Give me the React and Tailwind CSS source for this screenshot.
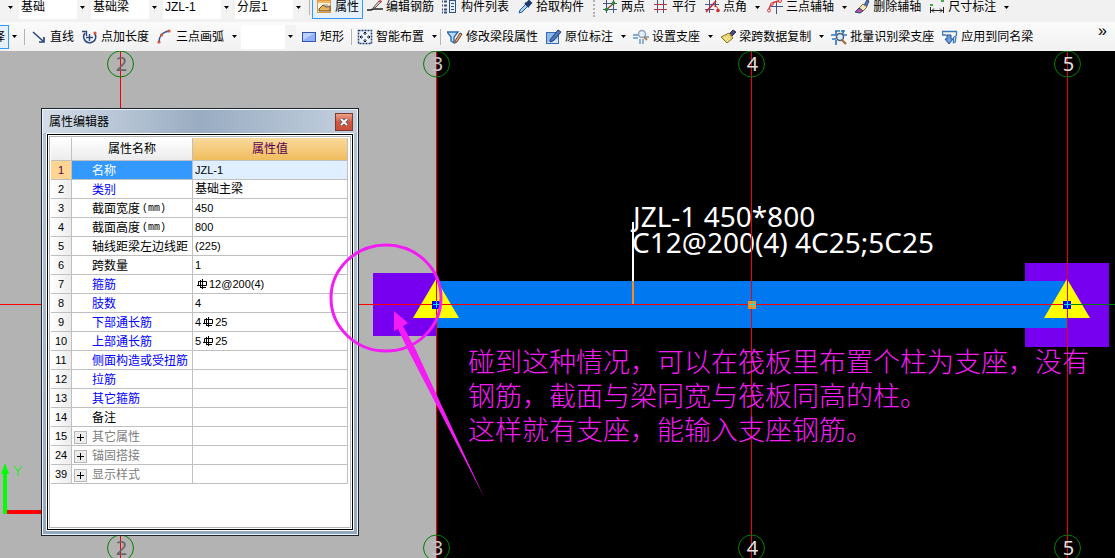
import React from "react";
import { clsx } from "clsx";

const icons = {
    property: (
        <>
            <rect x="1.5" y="1.5" width="13" height="12" fill="#fff6e0" stroke="#e39a3c" />
            <rect x="2" y="2" width="12" height="2" fill="#f6b765" />
            <path d="M3 10l4-4 3 2 4-1v5H3z" fill="#e8b45a" stroke="#6b4a20" />
            <path d="M8 6h4M10 8h3" stroke="#8a8f99" />
        </>
    ),
    editBar: (
        <>
            <path d="M0 11h4l2-1h10" stroke="#222" strokeWidth="1.6" fill="none" />
            <path d="M6 9l6-7 2 1-6 6z" fill="#f0d0b0" stroke="#555" />
            <path d="M12 2l1-1 2 1-1 2z" fill="#d33" />
        </>
    ),
    list: (
        <>
            <path d="M0 2.5h5M0 6.5h5M0 10.5h5M0 13.5h5" stroke="#34507c" strokeWidth="2" strokeDasharray="1 1 3 1" />
            <rect x="7.5" y="1.5" width="6" height="12" fill="#e6eefb" stroke="#34507c" />
            <path d="M9 4.5h3M9 7.5h3M9 10.5h3" stroke="#34507c" />
        </>
    ),
    dropper: (
        <>
            <path d="M2 14l1-3 6-6 2 2-6 6z" fill="#a8d4f4" stroke="#2b5f9e" />
            <path d="M8 4l4 4M9 5l3-3 2 2-3 3z" stroke="#1d3c6b" strokeWidth="2" fill="#1d3c6b" />
        </>
    ),
    twoPoints: (
        <>
            <path d="M4.5 1v13M11.5 1v13M1 4.5h14M1 10.5h14" stroke="#44558c" />
            <path d="M4 11l8-7" stroke="#7a5522" strokeWidth="1.4" />
            <circle cx="4.5" cy="10.5" r="1.8" fill="#2a8a2a" />
            <circle cx="11.5" cy="4" r="1.8" fill="#2a8a2a" />
        </>
    ),
    parallel: (
        <>
            <path d="M4.5 1v13M10.5 1v13" stroke="#44558c" />
            <path d="M1 5.5h13M1 10.5h13" stroke="#c0303a" />
        </>
    ),
    pointAngle: (
        <>
            <path d="M5.5 1v13M11.5 1v7M1 5.5h14M1 10.5h9" stroke="#44558c" />
            <path d="M2 13L12 2" stroke="#c22" strokeWidth="1.6" />
            <path d="M10 7c3 0 4 2 4 4" stroke="#d22" fill="none" />
            <circle cx="14" cy="11.5" r="1.8" fill="#d22" />
        </>
    ),
    arcAxis: (
        <>
            <path d="M9.5 3v12M4 7.5h12" stroke="#44558c" />
            <path d="M2 12C2 6 6 2 13 2" stroke="#d33" strokeWidth="1.4" fill="none" />
            <circle cx="2" cy="11.5" r="1.5" fill="#fff" stroke="#d33" />
            <circle cx="5" cy="5" r="1.3" fill="#fff" stroke="#d33" />
            <circle cx="13" cy="2" r="1.5" fill="#fff" stroke="#d33" />
        </>
    ),
    eraser: (
        <>
            <path d="M9 8l4-7 2 1-3 7z" fill="#4d7cc8" stroke="#28457a" />
            <path d="M5 9l4-4 4 3-4 4z" fill="#f3e6b8" stroke="#8b6b3a" />
            <path d="M1 13l4-4 4 3-3 2z" fill="#c0509c" stroke="#28457a" />
        </>
    ),
    dimension: (
        <>
            <path d="M1.5 8v6M14.5 8v6M2 11.5h12M5 9.5l-2 2 2 2M11 9.5l2 2-2 2" stroke="#222" fill="none" />
            <rect x="1" y="5" width="3" height="2" fill="#4a4" />
            <rect x="12" y="1" width="3" height="2" fill="#4a4" />
        </>
    ),
    line: (
        <>
            <path d="M2 3l10 9" stroke="#1f3f77" strokeWidth="1.4" />
            <path d="M13 8v5H8" stroke="#1f3f77" strokeWidth="1.6" fill="none" />
        </>
    ),
    pointLength: (
        <>
            <path d="M3 4a6 6 0 1 0 10 1" stroke="#2c4a7c" strokeWidth="1.7" fill="none" />
            <path d="M0 2.5h4.5V7M7.5 5v7M4 8.5h7" stroke="#2c4a7c" strokeWidth="1.4" fill="none" />
            <circle cx="13" cy="4" r="1.6" fill="#d4553c" />
        </>
    ),
    arc: (
        <>
            <path d="M2 13C2 8 5 3 12 2" stroke="#34568c" strokeWidth="1.5" fill="none" />
            <circle cx="2" cy="13" r="1.6" fill="#d4553c" />
            <circle cx="4.5" cy="6" r="1.6" fill="#d4553c" />
            <circle cx="12" cy="2" r="1.6" fill="#d4553c" />
        </>
    ),
    rect: (
        <>
            <rect x="1.5" y="3.5" width="13" height="9" fill="#8fb1f6" stroke="#2e56b8" />
            <path d="M2 4h12L2 11z" fill="#bcd1ff" />
        </>
    ),
    smart: (
        <>
            <rect x="1.5" y="1.5" width="13" height="13" fill="#eef4ff" stroke="#24426f" strokeWidth="1.5" strokeDasharray="2 1" />
            <path d="M8 3v3M8 10v3M3 8h3M10 8h3M6.5 4.5L8 3l1.5 1.5M6.5 11.5L8 13l1.5-1.5M4.5 6.5L3 8l1.5 1.5M11.5 6.5L13 8l-1.5 1.5" stroke="#111" fill="none" />
        </>
    ),
    modify: (
        <>
            <path d="M0 3h11L7 8v6l-3-2V8z" fill="#bfe0fb" stroke="#2a6cb4" strokeWidth="1.4" />
            <path d="M8 12l5-8 2 1-5 8-2 1z" fill="#e9a878" stroke="#6a4030" />
        </>
    ),
    inPlace: (
        <>
            <rect x="0.5" y="3.5" width="12" height="11" fill="#8fb8ec" stroke="#3a6ab0" />
            <path d="M1 14l4-4 3 2 4-3v5z" fill="#d6e8fb" />
            <path d="M4 11l8-10 3 2-8 9-3 1z" fill="#4d79bf" stroke="#1d3d73" />
        </>
    ),
    support: (
        <>
            <path d="M0 6h6M0 9h5M7 10v5M10 10v5M12 8h4" stroke="#5c95cf" strokeWidth="1.4" />
            <circle cx="9" cy="5" r="3.5" fill="#e3f0fb" stroke="#92a4b8" strokeWidth="1.5" />
            <path d="M11 8l3 3" stroke="#b08050" strokeWidth="2" />
        </>
    ),
    brush: (
        <>
            <path d="M9 5l4-4 3 2-4 4z" fill="#4a4a7c" stroke="#2d2d55" />
            <path d="M1 8l8-4 4 5-6 5z" fill="#e8d36a" stroke="#8a7428" />
            <path d="M4 8l4 4M6 7l4 4" stroke="#fff6bd" />
        </>
    ),
    batch: (
        <>
            <path d="M4 2h5M10 2h4M0 6h5M12 6h4M1 10h4M5 11v5M5 2v4M12 1v4" stroke="#2f7ac0" strokeWidth="1.7" />
            <circle cx="9" cy="8" r="3.5" fill="#dcecfb" stroke="#4e5f78" strokeWidth="1.5" />
            <path d="M11 11l4 4" stroke="#a5683a" strokeWidth="2.2" />
        </>
    ),
    apply: (
        <>
            <path d="M0 2.5h14.5v4l-3 2v6M0.5 2v4h4M14 8l-1 6" stroke="#3878bd" strokeWidth="1.3" fill="none" />
            <path d="M5 6h4v4h2l-4 5-4-5h2z" fill="#6aa0e4" stroke="#244f95" />
        </>
    ),
};

function Icon({ name }) {
    return (
        <svg viewBox="0 0 16 16" fill="none" className="size-4 shrink-0">
            {icons[name]}
        </svg>
    );
}

function Caret() {
    return (
        <svg viewBox="0 0 5 3" className="h-[3px] w-[5px]">
            <path d="M0 0h5L2.5 3z" fill="#000" />
        </svg>
    );
}

function Tool({ icon, label, menu, active }) {
    return (
        <div className="flex shrink-0 items-center">
            <button
                className={clsx(
                    "flex items-center gap-[3px]",
                    active ? "h-6 border border-[#3399ff] bg-[#e4f0fc] px-[3px]" : "px-1"
                )}
            >
                <Icon name={icon} />
                <span>{label}</span>
            </button>
            {menu && (
                <button aria-label={`${label} ▾`} className="flex h-5 w-3 items-center justify-center">
                    <Caret />
                </button>
            )}
        </div>
    );
}

function Combo({ label, value, wide }) {
    return (
        <label className={clsx("relative flex h-6 shrink-0 bg-white", wide ? "w-[69px]" : "w-[55px]")}>
            <select aria-label={label} className="w-full appearance-none bg-transparent pl-[2px] outline-none">
                <option>{value}</option>
            </select>
            <span className="pointer-events-none absolute inset-y-0 right-0 flex w-[11px] items-center justify-center bg-[#f3f3f3]">
                <Caret />
            </span>
        </label>
    );
}

function Toolbars() {
    return (
        <header className="shrink-0 overflow-hidden bg-[#f1f1f1] text-xs text-black">
            <div className="flex h-[22px] items-center pb-2">
                <div className="flex h-6 w-[19px] shrink-0 items-center justify-center bg-[#f3f3f3] pl-[2px]">
                    <Caret />
                </div>
                <div className="flex shrink-0 gap-[3px]">
                    <Combo label="构件类别" value="基础" wide />
                    <Combo label="构件类型" value="基础梁" wide />
                    <Combo label="构件" value="JZL-1" wide />
                    <Combo label="分层" value="分层1" wide />
                </div>
                <span className="mr-[2px] ml-[5px] h-4 w-px shrink-0 bg-[#b4b4b4]" />
                <Tool icon="property" label="属性" active />
                <Tool icon="editBar" label="编辑钢筋" />
                <Tool icon="list" label="构件列表" />
                <Tool icon="dropper" label="拾取构件" />
                <span className="mr-[3px] ml-[5px] h-5 shrink-0 border-l-2 border-dotted border-[#b0b0b0]" />
                <Tool icon="twoPoints" label="两点" />
                <Tool icon="parallel" label="平行" />
                <Tool icon="pointAngle" label="点角" menu />
                <Tool icon="arcAxis" label="三点辅轴" menu />
                <Tool icon="eraser" label="删除辅轴" />
                <Tool icon="dimension" label="尺寸标注" menu />
            </div>
            <div className="flex h-[29px] items-center bg-linear-to-b from-[#fbfbfb] to-[#f1f1f1]">
                <button className="flex h-6 w-[9px] shrink-0 items-center justify-end overflow-hidden border border-l-0 border-[#3399ff] bg-[#e4f0fc] pr-[3px]">
                    择
                </button>
                <button aria-label="选择 ▾" className="flex h-6 w-[10px] shrink-0 items-center justify-center">
                    <Caret />
                </button>
                <span className="mr-[2px] ml-[5px] h-4 w-px shrink-0 bg-[#b4b4b4]" />
                <Tool icon="line" label="直线" />
                <Tool icon="pointLength" label="点加长度" />
                <Tool icon="arc" label="三点画弧" menu />
                <div className="shrink-0 px-px">
                    <Combo label="画弧方式" value="" />
                </div>
                <Tool icon="rect" label="矩形" />
                <span className="mr-px ml-[3px] h-4 w-px shrink-0 bg-[#b4b4b4]" />
                <Tool icon="smart" label="智能布置" menu />
                <span className="mr-[2px] h-4 w-px shrink-0 bg-[#b4b4b4]" />
                <Tool icon="modify" label="修改梁段属性" />
                <Tool icon="inPlace" label="原位标注" menu />
                <Tool icon="support" label="设置支座" menu />
                <Tool icon="brush" label="梁跨数据复制" menu />
                <Tool icon="batch" label="批量识别梁支座" />
                <Tool icon="apply" label="应用到同名梁" />
                <button aria-label="更多" className="mr-2 ml-auto pb-3 text-base leading-4">
                    »
                </button>
            </div>
        </header>
    );
}

/* HRB400 rebar sign */
function Rebar() {
    return (
        <svg viewBox="0 0 10 10" className="mx-[2px] inline size-[10px] align-[-1px]">
            <path d="M5.5 0v10M1.5 2.5h8v4h-8zM3.5 1v7M0 6.5h2M3 8.5h6" stroke="#000" fill="none" />
        </svg>
    );
}

const rows = [
    { id: 1, name: "名称", value: "JZL-1", selected: true },
    { id: 2, name: "类别", value: "基础主梁", blue: true, cjk: true },
    { id: 3, name: "截面宽度", unit: "(mm)", value: "450" },
    { id: 4, name: "截面高度", unit: "(mm)", value: "800" },
    { id: 5, name: "轴线距梁左边线距", value: "(225)" },
    { id: 6, name: "跨数量", value: "1" },
    { id: 7, name: "箍筋", value: <><Rebar />12@200(4)</>, blue: true },
    { id: 8, name: "肢数", value: "4", blue: true },
    { id: 9, name: "下部通长筋", value: <>4<Rebar />25</>, blue: true },
    { id: 10, name: "上部通长筋", value: <>5<Rebar />25</>, blue: true },
    { id: 11, name: "侧面构造或受扭筋", blue: true },
    { id: 12, name: "拉筋", blue: true },
    { id: 13, name: "其它箍筋", blue: true },
    { id: 14, name: "备注" },
    { id: 15, name: "其它属性", group: true },
    { id: 24, name: "锚固搭接", group: true },
    { id: 39, name: "显示样式", group: true },
];

function PropertyRow({ row }) {
    return (
        <tr className="h-[19px]">
            <th
                scope="row"
                className={clsx(
                    "border-r border-b border-[#c0c0c0] p-0 text-[11px] font-normal",
                    row.selected ? "bg-[#ffd591] text-[#5a0050]" : "bg-linear-to-r from-white to-[#ececec]"
                )}
            >
                {row.id}
            </th>
            <td
                className={clsx(
                    "border-r border-b border-[#c0c0c0] p-0",
                    row.selected && "bg-[#3399ff] text-white",
                    row.blue && "text-[#0000ff]",
                    row.group && "text-[#808080]"
                )}
            >
                <div className="flex items-center pt-[2px] leading-4 whitespace-nowrap">
                    <span className="flex w-5 shrink-0 pl-[2px]">
                        {row.group && (
                            <button
                                aria-label={`展开${row.name}`}
                                className="flex size-[13px] items-center justify-center border border-[#b8b8b8] bg-[#ececec]"
                            >
                                <svg viewBox="0 0 7 7" className="size-[7px]">
                                    <path d="M3.5 0v7M0 3.5h7" stroke="#000" />
                                </svg>
                            </button>
                        )}
                    </span>
                    {row.name}
                    {row.unit && (
                        <span className="pl-[2px] font-['Liberation_Mono',monospace] text-[10px]">{row.unit}</span>
                    )}
                </div>
            </td>
            <td
                className={clsx(
                    "border-r border-b border-[#c0c0c0] p-0 pl-[2px] leading-[18px]",
                    row.selected && "bg-[#e0efff]",
                    !row.cjk && "text-[11px]"
                )}
            >
                {row.value}
            </td>
        </tr>
    );
}

function PropertyEditor() {
    return (
        <section className="absolute top-[57px] left-[41px] w-[318px] border border-[#1b2530] text-xs text-black">
            <div className="border border-[#eef4fa] bg-linear-to-b from-[#b3c4d6] to-[#93a9c1] px-[3px] pb-[3px]">
                <div className="-mx-[3px] flex h-[23px] items-center justify-between bg-linear-to-r from-[#d3dde8] via-[#9aacc2] to-[#c3d0de] pr-1 pl-[6px]">
                    <h2>属性编辑器</h2>
                    <button
                        aria-label="关闭"
                        className="flex size-[18px] items-center justify-center border border-[#7c3a34] bg-linear-to-b from-[#eda08c] via-[#d2553f] to-[#c8503a]"
                    >
                        <svg viewBox="0 0 8 8" className="size-2">
                            <path d="M1 1l6 6M7 1L1 7" stroke="#4a4a55" strokeWidth="3.4" />
                            <path d="M1 1l6 6M7 1L1 7" stroke="#fff" strokeWidth="2" />
                        </svg>
                    </button>
                </div>
                <div className="border border-white">
                    <div className="border border-black bg-white p-px">
                        <div className="border border-[#b4b4b4] pt-px pb-[43px] pl-px">
                            <table className="w-[297px] table-fixed border-separate border-spacing-0">
                                <colgroup>
                                    <col className="w-[21px]" />
                                    <col className="w-[121px]" />
                                    <col />
                                </colgroup>
                                <thead>
                                    <tr className="h-[23px]">
                                        <th className="border-r border-b border-[#c0c0c0] bg-linear-to-b from-white to-[#ececec] p-0" />
                                        <th className="border-r border-b border-[#c0c0c0] bg-linear-to-b from-white to-[#ececec] p-0 font-normal">
                                            属性名称
                                        </th>
                                        <th className="border-r border-b border-[#c0c0c0] bg-linear-to-b from-[#f9d99b] to-[#f1bd5c] p-0 font-normal text-[#5a0050]">
                                            属性值
                                        </th>
                                    </tr>
                                </thead>
                                <tbody>
                                    {rows.map((row) => (
                                        <PropertyRow key={row.id} row={row} />
                                    ))}
                                </tbody>
                            </table>
                        </div>
                    </div>
                </div>
            </div>
        </section>
    );
}

const axes = [
    { id: "2", x: 120.5, color: "#666666" },
    { id: "3", x: 436.5, color: "#c8c8c8" },
    { id: "4", x: 751.5, color: "#e0e0e0" },
    { id: "5", x: 1067.5, color: "#e0e0e0" },
];

function Bubble({ axis, y }) {
    const points = Array.from({ length: 16 }, (_, i) => {
        const a = (i * Math.PI) / 8;
        return `${axis.x + 13 * Math.cos(a)},${y + 13 * Math.sin(a)}`;
    }).join(" ");
    return (
        <>
            <polygon points={points} fill="none" stroke="#008000" />
            <text
                x={axis.x + 1}
                y={y + 7}
                textAnchor="middle"
                fill={axis.color}
                className="font-['Noto_Sans',sans-serif] text-[20px]"
            >
                {axis.id}
            </text>
        </>
    );
}

function Grip({ x, color }) {
    return (
        <>
            <rect x={x - 4} y="250" width="8" height="8" fill={color} />
            <path d={`M${x - 3} 253.5h7M${x + 0.5} 250v7`} stroke="#00e8e8" />
        </>
    );
}

function Drawing() {
    return (
        <svg className="absolute inset-0 size-full">
            <rect width="436" height="100%" fill="#b3b3b3" />

            {/* columns and beam */}
            <rect x="373" y="222" width="63" height="63" fill="#7800f0" />
            <rect x="1025" y="212" width="84" height="84" fill="#7800f0" />
            <rect x="437" y="230" width="630" height="47" fill="#0078f0" />
            <path d="M436 228l23 39h-46zM1067 228l23 39h-46z" fill="#ffff00" />

            {/* beam label */}
            <path d="M633 171v59" stroke="#ffffff" strokeWidth="2" />
            <path d="M633 230v23" stroke="#ff8c1a" strokeWidth="2" />
            <g fill="#ffffff" className="font-['Noto_Sans',sans-serif] text-[28px]">
                <text x="633" y="176">JZL-1 450*800</text>
                <text x="632" y="202">C12@200(4) 4C25;5C25</text>
            </g>

            {/* axes */}
            <path d="M0 253.5H1067" stroke="#ff0000" />
            <line x1="1067" y1="253.5" x2="100%" y2="253.5" stroke="#008000" />
            {axes.map((axis) => (
                <g key={axis.id}>
                    <line x1={axis.x} y1="0" x2={axis.x} y2="100%" stroke="#f00000" />
                    <Bubble axis={axis} y={13} />
                    <Bubble axis={axis} y={497} />
                </g>
            ))}
            <Grip x={436} color="#0000ff" />
            <Grip x={752} color="#ff8c1a" />
            <Grip x={1067} color="#0000ff" />

            {/* UCS */}
            <path d="M5 461h60" stroke="#ff0000" strokeWidth="4" />
            <path d="M5 463v-42" stroke="#00ff00" strokeWidth="4" />
            <path d="M5 412l4 11H1z" fill="#00ff00" />
            <path d="M14 415l4 5 4-5M18 420v5" stroke="#00ff00" fill="none" />
        </svg>
    );
}

function Annotation() {
    return (
        <>
            <p className="absolute top-[295px] left-[468px] text-[27px] leading-[34px] font-light whitespace-nowrap text-[#f41cf4]">
                碰到这种情况，可以在筏板里布置个柱为支座，没有
                <br />
                钢筋，截面与梁同宽与筏板同高的柱。
                <br />
                这样就有支座，能输入支座钢筋。
            </p>
            <svg className="pointer-events-none absolute inset-0 size-full">
                <ellipse cx="386" cy="247" rx="55" ry="53" fill="none" stroke="#f41cf4" strokeWidth="3" />
                <path d="M394 260L408 272L403 275L415 297L484 446L407 297L398 278L394 280z" fill="#f41cf4" />
            </svg>
        </>
    );
}

export default function App() {
    return (
        <div className="flex h-screen flex-col overflow-hidden font-['Liberation_Sans','Noto_Sans_CJK_SC',sans-serif]">
            <Toolbars />
            <main className="relative flex-1 overflow-hidden bg-black">
                <Drawing />
                <PropertyEditor />
                <Annotation />
            </main>
        </div>
    );
}
